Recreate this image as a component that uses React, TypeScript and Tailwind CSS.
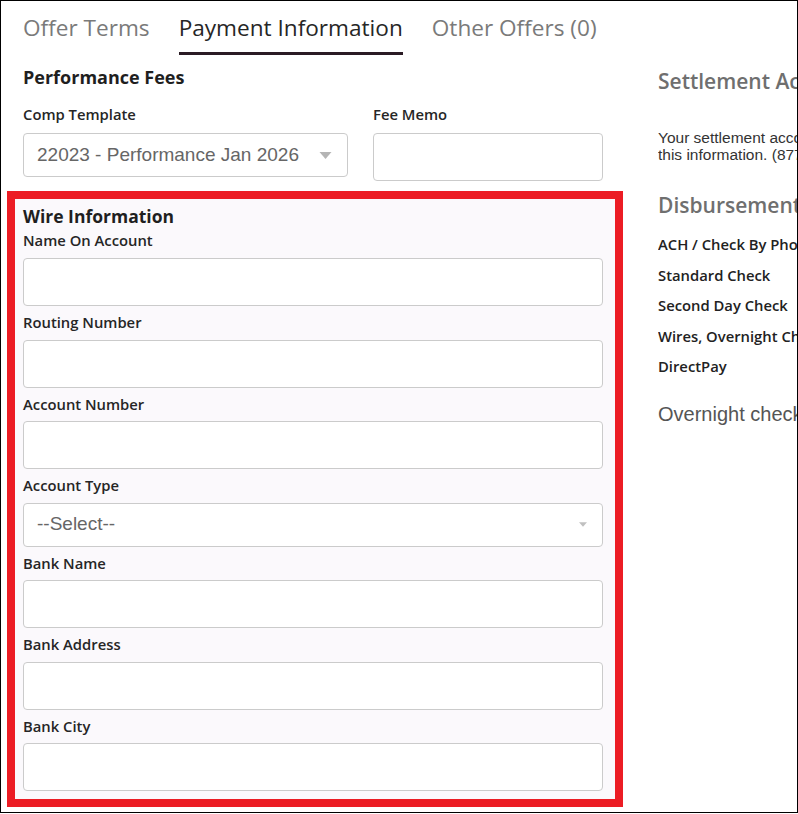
import React from 'react';

const wireFields = ['Name On Account', 'Routing Number', 'Account Number', 'Account Type', 'Bank Name', 'Bank Address', 'Bank City'];

const disbursements = ['ACH / Check By Phone', 'Standard Check', 'Second Day Check', 'Wires, Overnight Check', 'DirectPay'];

function Caret({ className }: { className?: string }) {
  return (
    <svg viewBox="0 0 12 7" className={className}>
      <path d="M0 0 L12 0 L6 7 Z" fill="currentColor" />
    </svg>
  );
}

function TextInput({ className = '' }: { className?: string }) {
  return (
    <div className={`h-[48px] rounded-[4px] border border-[#cbcbcb] bg-white ${className}`} />
  );
}

function SelectBox({ value, small }: { value: string; small?: boolean }) {
  return (
    <div className="flex h-[44px] items-center justify-between rounded-[4px] border border-[#cbcbcb] bg-white pl-[13px] pr-[15px]">
      <span className="font-['Liberation_Sans',Arial,sans-serif] text-[19px] text-[#666]">{value}</span>
      {small ? (
        <Caret className="h-[7px] w-[8px] text-[#c0c0c0]" />
      ) : (
        <Caret className="h-[7px] w-[13px] text-[#b5b5b5]" />
      )}
    </div>
  );
}

export default function App() {
  return (
    <div className="flex h-[813px] w-[798px] overflow-hidden border border-black bg-white font-['Open_Sans','Liberation_Sans',sans-serif] text-[#222]">
      {/* Left column */}
      <div className="ml-[6px] flex w-[616px] shrink-0 flex-col">
        <div className="px-[16px] pt-[12px]">
          {/* Tabs */}
          <div className="flex gap-[29px] text-[22.6px] leading-[30px]">
            <div className="pb-[12px] text-[#7a7a7a]">Offer Terms</div>
            <div className="border-b-[3px] border-[#2a1b24] pb-[9px] text-[#262626]">Payment Information</div>
            <div className="pb-[12px] text-[#7a7a7a]">Other Offers (0)</div>
          </div>

          <h2 className="mt-[10px] text-[18px] font-bold leading-[24px] text-[#1f1f1f]">Performance Fees</h2>

          <div className="mt-[15px] flex gap-[25px]">
            <div className="w-[325px]">
              <div className="text-[14.8px] font-semibold leading-[20px] text-[#262626]">Comp Template</div>
              <div className="mt-[9px]">
                <SelectBox value="22023 - Performance Jan 2026" />
              </div>
            </div>
            <div className="w-[230px]">
              <div className="text-[14.8px] font-semibold leading-[20px] text-[#262626]">Fee Memo</div>
              <div className="mt-[9px]">
                <TextInput />
              </div>
            </div>
          </div>
        </div>

        {/* Wire information, outlined */}
        <div className="mt-[10px] border-[8px] border-[#ec1c24] bg-[#fbf9fc] pb-[8px] pl-[8px] pr-[12px] pt-[6px]">
          <h2 className="text-[17.5px] font-bold leading-[22px] text-[#1f1f1f]">Wire Information</h2>
          {wireFields.map((f, i) => (
            <div key={f}>
              <div className={`${i === 0 ? 'mt-[3px] mb-[8px]' : 'mt-[6px] mb-[7.5px]'} text-[14.8px] font-semibold leading-[20px] text-[#262626]`}>{f}</div>
              {f === 'Account Type' ? <SelectBox value="--Select--" small /> : <TextInput />}
            </div>
          ))}
        </div>
      </div>

      {/* Right column */}
      <div className="ml-[35px] min-w-0 flex-1 overflow-hidden whitespace-nowrap pt-[66px]">
        <h3 className="text-[21px] font-semibold leading-[28px] text-[#6f6f6f]">Settlement Account</h3>
        <div className="mt-[34px] font-['Liberation_Sans',Arial,sans-serif] text-[15.5px] leading-[17px] text-[#333]">
          <div>Your settlement account will be used for</div>
          <div>this information. (877) 555-0100</div>
        </div>
        <h3 className="mt-[28px] text-[21px] font-semibold leading-[28px] text-[#6f6f6f]">Disbursement Options</h3>
        <div className="mt-[10px]">
          {disbursements.map((d) => (
            <div key={d} className="text-[14.8px] font-semibold leading-[30.5px] text-[#222]">{d}</div>
          ))}
        </div>
        <div className="mt-[20px] font-['Liberation_Sans',Arial,sans-serif] text-[20px] leading-[24px] text-[#555]">Overnight checks</div>
      </div>
    </div>
  );
}
